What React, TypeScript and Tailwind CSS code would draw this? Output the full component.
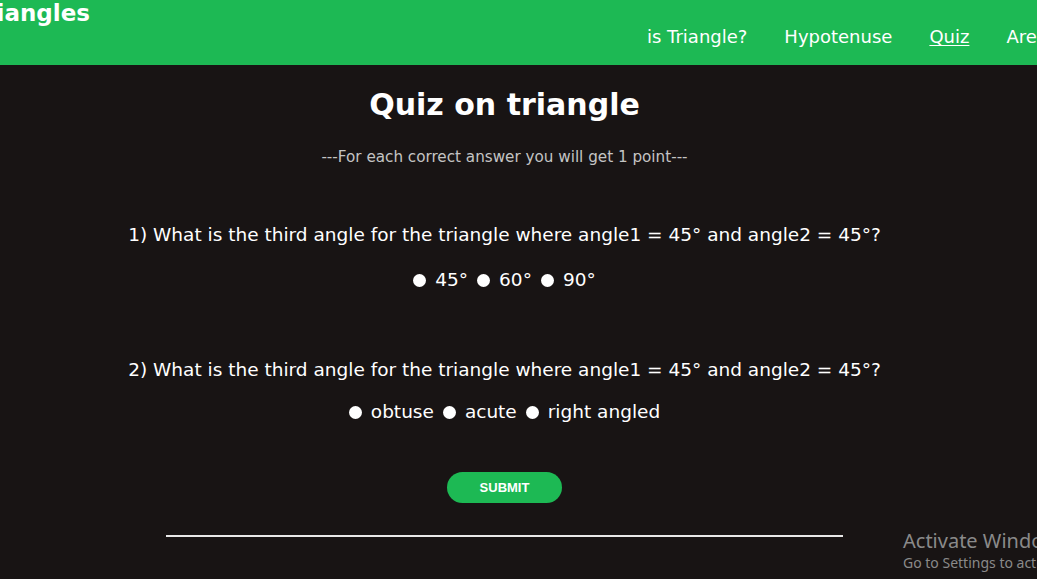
import React from "react";

const font = { fontFamily: '"DejaVu Sans", "Open Sans", sans-serif' };

function Radio({ label }: { label: string }) {
  return (
    <span className="flex items-center gap-[9px]">
      <span className="inline-block w-[13px] h-[13px] rounded-full bg-white" />
      <span>{label}</span>
    </span>
  );
}

export default function App() {
  return (
    <div className="w-[1037px] h-[579px] overflow-hidden bg-[#181414] text-white relative" style={font}>
      <header className="h-[65px] bg-[#1db954] relative overflow-hidden">
        <div className="absolute left-[-28px] top-[-2px] text-[23px] font-bold leading-[30px]">Triangles</div>
        <nav className="absolute left-[647px] top-[25px] flex gap-[37px] text-[18px] leading-[24px] whitespace-nowrap">
          <a>is Triangle?</a>
          <a>Hypotenuse</a>
          <a className="underline underline-offset-2">Quiz</a>
          <a>Area</a>
        </nav>
      </header>
      <main className="w-[1009px] flex flex-col items-center">
        <h1 className="mt-[20px] text-[30px] font-bold leading-[40px]">Quiz on triangle</h1>
        <p className="mt-[22px] text-[15.2px] leading-[20px] text-[#c4c4c4]">---For each correct answer you will get 1 point---</p>
        <p className="mt-[56px] text-[18.5px] leading-[24px]">1) What is the third angle for the triangle where angle1 = 45° and angle2 = 45°?</p>
        <div className="mt-[21px] flex gap-[9px] text-[18.5px] leading-[24px]">
          <Radio label="45°" />
          <Radio label="60°" />
          <Radio label="90°" />
        </div>
        <p className="mt-[66px] text-[18.5px] leading-[24px]">2) What is the third angle for the triangle where angle1 = 45° and angle2 = 45°?</p>
        <div className="mt-[18px] flex gap-[9px] text-[18.5px] leading-[24px]">
          <Radio label="obtuse" />
          <Radio label="acute" />
          <Radio label="right angled" />
        </div>
        <button
          className="mt-[48px] w-[115px] h-[31px] rounded-full bg-[#1db954] text-[13px] font-bold text-white"
          style={{ fontFamily: '"Liberation Sans", Arial, sans-serif' }}
        >
          SUBMIT
        </button>
        <div className="mt-[32px] w-[677px] h-[2px] bg-[#e8e8e8]" />
      </main>
      <div
        className="absolute left-[903px] top-[529px] text-[#8a8a8a] whitespace-nowrap"
        style={{ fontFamily: '"Noto Sans", "Open Sans", sans-serif' }}
      >
        <div className="text-[20px] leading-[24px]">Activate Windows</div>
        <div className="text-[14px] leading-[20px]">Go to Settings to activate Windows.</div>
      </div>
    </div>
  );
}
